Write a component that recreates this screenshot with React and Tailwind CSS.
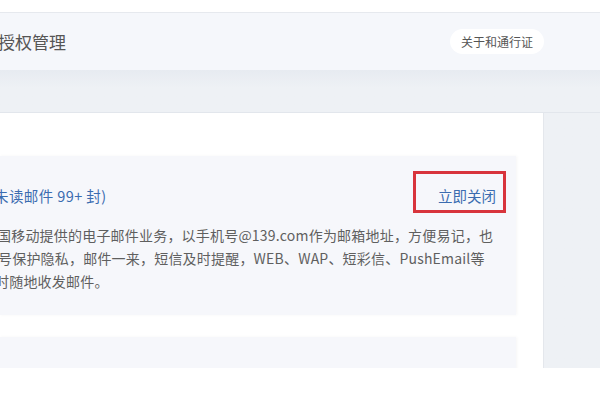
export default function App() {
  return (
    <div className="h-[400px] w-[600px] overflow-hidden bg-white font-['Noto_Sans_CJK_SC','Noto_Sans',sans-serif]">
      {/* top strip */}
      <div className="h-[13px] bg-white border-b border-[#e6e9ee]" />

      {/* header */}
      <header className="h-[57px] bg-[#f5f7fb] flex items-center justify-between pr-[56px]">
        <h1 className="ml-[-2px] text-[17px] text-[#555] whitespace-nowrap">授权管理</h1>
        <span className="h-[25px] w-[94px] rounded-full bg-white flex items-center justify-center text-[12px] text-[#555]">
          关于和通行证
        </span>
      </header>

      {/* main */}
      <div className="h-[298px] bg-gradient-to-b from-[#e7ebf1] via-[#eef1f5] via-[6%] to-[#eef1f5] flex flex-col">
        <div className="h-[43px] border-b border-[#e2e6ec] shrink-0" />
        <div className="flex flex-1 min-h-0">
          <div className="w-[544px] bg-white pt-[43px] pr-[27px] flex flex-col gap-[22px] overflow-hidden border-r border-[#e4e7ec]">
            <div className="relative bg-[#f6f7fb] pt-[28px] pb-[22px] pr-[20px] shadow-[1px_0_3px_rgba(0,0,0,0.04)]">
              <div className="flex items-center justify-between h-[24px]">
                <span className="ml-[-6px] text-[14.5px] tracking-[0.4px] text-[#3b6cb0] whitespace-nowrap">未读邮件 99+ 封)</span>
                <a className="text-[14.5px] text-[#3b6cb0] whitespace-nowrap">立即关闭</a>
              </div>
              <div className="mt-[16px] text-[14px] tracking-[0.2px] leading-[23px] text-[#5f5f5f] whitespace-nowrap">
                <p className="ml-[-3px]">国移动提供的电子邮件业务，以手机号@139.com作为邮箱地址，方便易记，也</p>
                <p className="ml-[-2px]">号保护隐私，邮件一来，短信及时提醒，WEB、WAP、短彩信、PushEmail等</p>
                <p className="ml-[-5px]">时随地收发邮件。</p>
              </div>
              <div className="absolute top-[15px] right-[10px] w-[93px] h-[42px] border-[3px] border-[#d8343c]" />
            </div>
            <div className="bg-[#f6f7fb] h-[60px] shrink-0 shadow-[1px_0_3px_rgba(0,0,0,0.04)]" />
          </div>
          <div className="flex-1" />
        </div>
      </div>
    </div>
  );
}
